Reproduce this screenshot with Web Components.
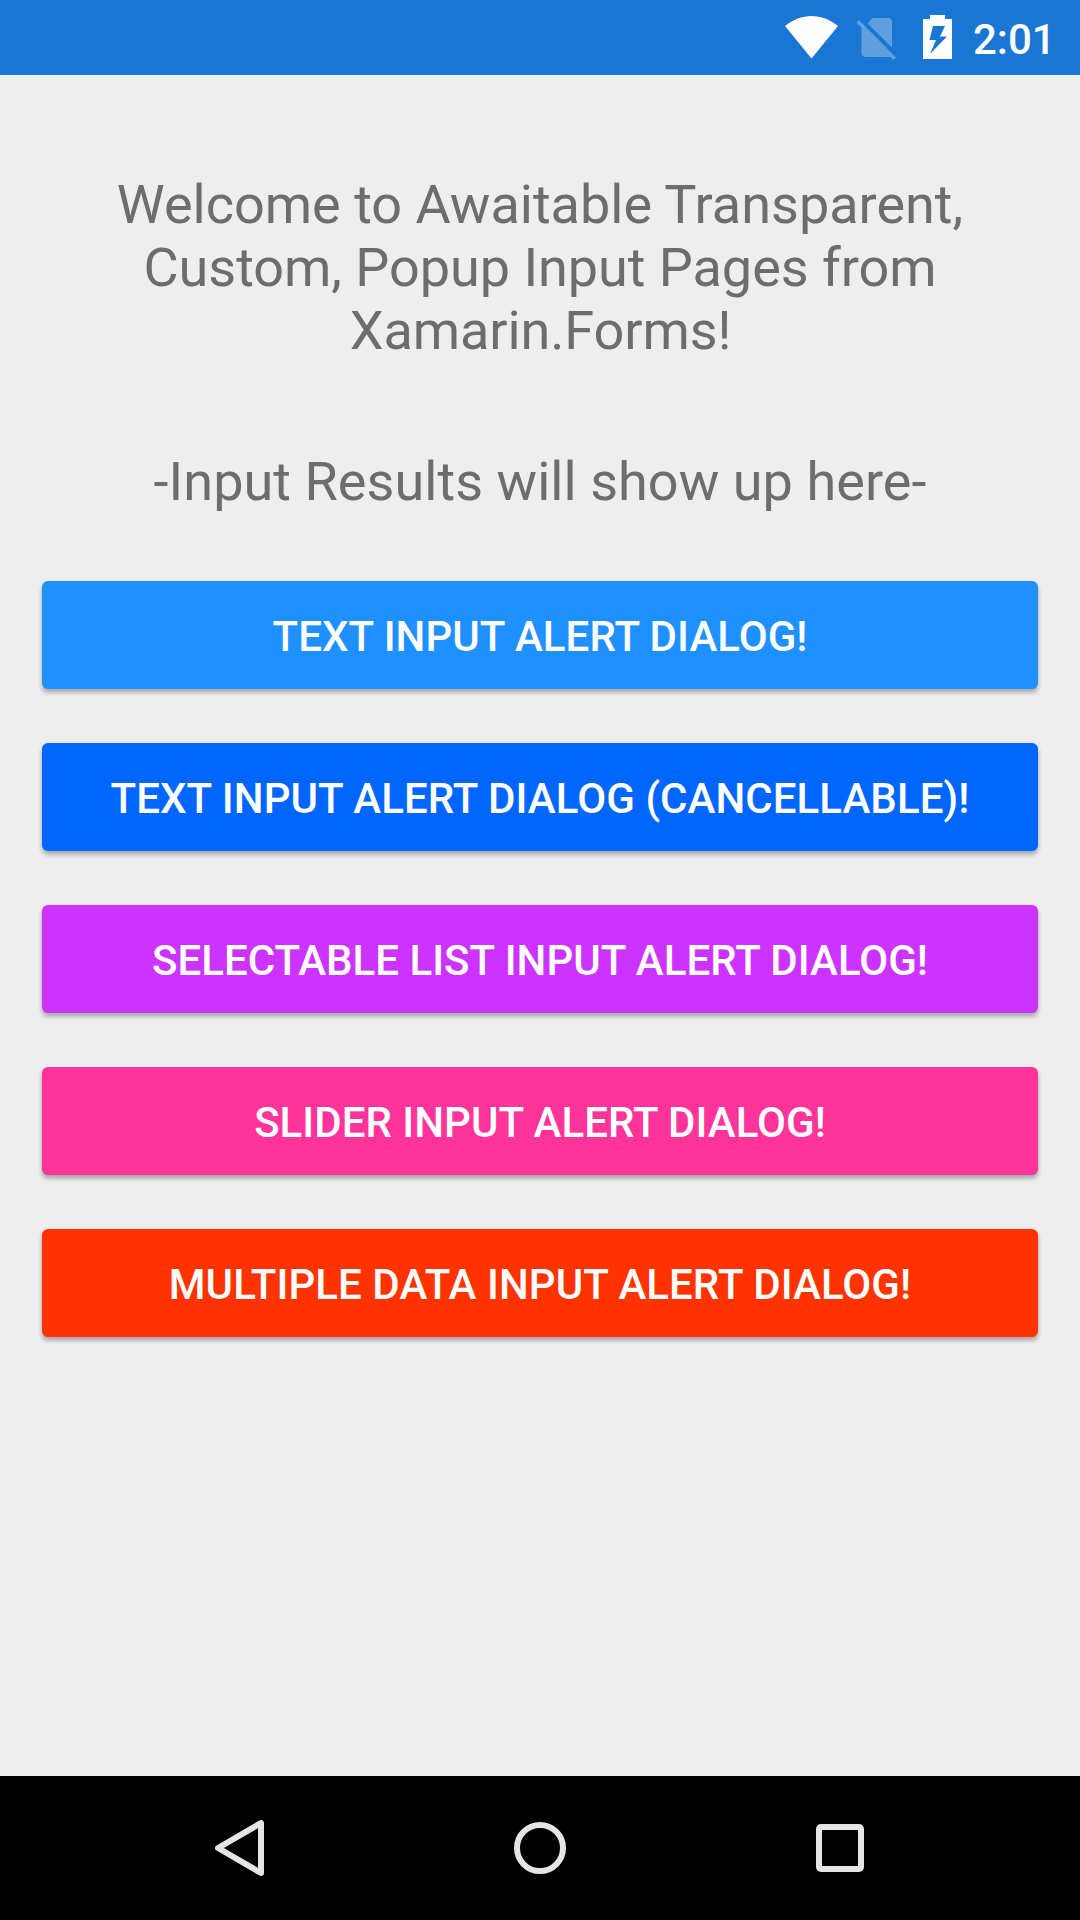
<!DOCTYPE html>
<html lang="en">
<head>
<meta charset="utf-8">
<title>Popup Input Pages</title>
<style>
html, body { margin: 0; }
body { width: 1080px; height: 1920px; overflow: hidden; font-family: Roboto, sans-serif; }
</style>
</head>
<body>
<app-screen>
  <status-bar slot="top">2:01</status-bar>
  <text-label>Welcome to Awaitable Transparent,<br><span style="letter-spacing:-.04px">Custom, Popup Input Pages from</span><br><span style="letter-spacing:-.1px;padding-left:1px">Xamarin.Forms!</span></text-label>
  <text-label style="letter-spacing:.05px">-Input Results will show up here-</text-label>
  <button-stack>
    <dialog-button color="#1e90ff" tracking=".05px">TEXT INPUT ALERT DIALOG!</dialog-button>
    <dialog-button color="#0066ff" tracking=".07px">TEXT INPUT ALERT DIALOG (CANCELLABLE)!</dialog-button>
    <dialog-button color="#cc33ff" tracking=".02px">SELECTABLE LIST INPUT ALERT DIALOG!</dialog-button>
    <dialog-button color="#ff3399" tracking=".03px">SLIDER INPUT ALERT DIALOG!</dialog-button>
    <dialog-button color="#ff3300" tracking=".07px">MULTIPLE DATA INPUT ALERT DIALOG!</dialog-button>
  </button-stack>
  <nav-bar slot="bottom"></nav-bar>
</app-screen>
<script>
const define = (name, html, setup) => customElements.define(name, class extends HTMLElement {
  constructor() {
    super();
    this.attachShadow({ mode: 'open' }).innerHTML = html;
  }
  connectedCallback() { if (setup) setup(this); }
});

define('app-screen', `
<style>
:host { display: flex; flex-direction: column; width: 1080px; height: 1920px; background: #eeeeee; }
main { flex: 1; display: flex; flex-direction: column; gap: 88px; padding-top: 98px; box-sizing: border-box; }
</style>
<slot name="top"></slot><main><slot></slot></main><slot name="bottom"></slot>`);

define('status-bar', `
<style>
:host { display: flex; height: 75px; background: #1976d2; color: #fff; font: 500 42px/49px Roboto, sans-serif; justify-content: flex-end; }
svg { display: block; width: 190px; height: 75px; }
span { width: 110px; padding: 15px 0 0 3px; box-sizing: border-box; white-space: nowrap; }
</style>
<svg viewBox="780 0 190 75" fill="#fff">
  <path d="M785 26C801 12.500 822 12.500 838 26L811.500 58.500Z"/>
  <g fill-opacity=".3">
    <path d="M867.500 23.500L872.500 18H888Q892 18 892 22V47.500Z"/>
    <path d="M859 20L856.500 22.700L861.500 28V52.500Q861.500 57 866 57H890L893.500 60L896 57.500Z"/>
  </g>
  <path fill-rule="evenodd" d="M923 19H930V15H945V19H952V59H923ZM933 26L929.500 40H936L930 54L947 36.500H940L945 26Z"/>
</svg><span><slot></slot></span>`);

define('text-label', `
<style>
:host { display: block; color: #6d6d6d; font: 400 54px/63px Roboto, sans-serif; text-align: center; }
</style><slot></slot>`);

define('button-stack', `
<style>
:host { display: flex; flex-direction: column; gap: 54px; padding: 0 42px; margin-top: -20px; }
</style><slot></slot>`);

define('dialog-button', `
<style>
:host { display: block; }
button { display: flex; width: 100%; height: 108px; align-items: center; justify-content: center; border: 0; border-radius: 6px; padding: 2px 0 0; color: #fff; background: var(--fill); font: 500 42px/49px Roboto, sans-serif; letter-spacing: var(--tracking); box-shadow: 0 4px 4px rgba(0,0,0,.2), 0 2px 5px rgba(0,0,0,.14); }
</style><button><slot></slot></button>`,
el => {
  el.style.setProperty('--fill', el.getAttribute('color'));
  el.style.setProperty('--tracking', el.getAttribute('tracking'));
});

define('nav-bar', `
<style>
:host { display: flex; height: 144px; align-items: center; justify-content: center; gap: 156px; background: #000; }
svg { width: 144px; height: 144px; fill: none; stroke: #e5e5e5; stroke-width: 6; stroke-linejoin: round; }
</style>
<svg viewBox="168 1776 144 144"><path d="M218 1848L261 1823V1873Z"/></svg>
<svg viewBox="468 1776 144 144"><circle cx="540" cy="1848" r="23"/></svg>
<svg viewBox="768 1776 144 144"><rect x="819" y="1827" width="42" height="42" rx="2"/></svg>`);
</script>
</body>
</html>
